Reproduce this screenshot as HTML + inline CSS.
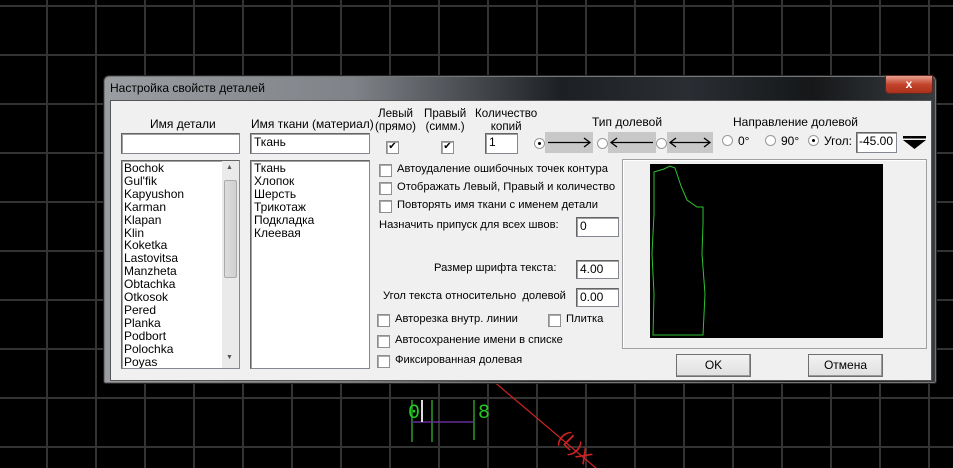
<!DOCTYPE html>
<html><head><meta charset="utf-8"><style>
*{margin:0;padding:0;box-sizing:border-box}
body{width:953px;height:468px;overflow:hidden;position:relative;background-color:#000;
background-image:linear-gradient(90deg,#333 2px,transparent 2px),linear-gradient(#333 2px,transparent 2px);
background-size:49px 49px;background-position:46px 5px;font-family:"Liberation Sans",sans-serif;font-size:11.2px;color:#000}
.a{position:absolute;white-space:nowrap}
.frame{position:absolute;left:103px;top:75px;width:834px;height:309px;border-radius:6px 6px 3px 3px;
background:linear-gradient(90deg,#9a9ea2 0,#7f8388 30%,#1c2024 55%,#2a2e33 70%,#151719 85%,#3a3d40 100%);border:1px solid #222;box-shadow:0 0 0 1px #777 inset}
.client{position:absolute;left:110px;top:100px;width:822px;height:281px;background:#f0f0f0;border:1px solid #555}
.in{position:absolute;background:#fff;border:1px solid #828790;border-top-color:#646464;border-left-color:#646464;box-shadow:inset 1px 1px 0 #a0a0a0;padding:1px 3px;font-size:12px;line-height:15px}
.cb{position:absolute;width:13px;height:13px;background:#fff;border:1px solid #8e8f8f;box-shadow:inset 1px 1px 0 #aaa}
.rd{position:absolute;width:11px;height:11px;border-radius:50%;background:#fff;border:1px solid #999}
.rd.on::after{content:"";position:absolute;left:3px;top:3px;width:3px;height:3px;border-radius:50%;background:#000}
.btn{position:absolute;height:23px;border:1px solid #707070;background:linear-gradient(#f2f2f2,#e0e0e0);text-align:center;line-height:21px;font-size:12px;box-shadow:inset -1px -1px 0 #999}
.list div{line-height:12.9px;font-size:12px}
.arr{position:absolute;top:132px;height:21px;background:#c8c8c8}
</style></head><body>
<svg class="a" style="left:400px;top:380px" width="220" height="88">
<path d="M12 20v42M32 20v42M74 20v40" stroke="#2a9a2a" stroke-width="1.5" fill="none"/>
<path d="M12 42h62" stroke="#c22" stroke-width="1.5"/>
<path d="M12 42h62" stroke="#33c" stroke-width="1"/>
<path d="M22 20v22" stroke="#ddd" stroke-width="2"/>
<text x="8" y="38" fill="#2c2" font-size="20" font-family="Liberation Mono">0</text>
<text x="78" y="38" fill="#2c2" font-size="20" font-family="Liberation Mono">8</text>
<path d="M92 0L210 100" stroke="#c22" stroke-width="1.2"/>
<text x="160" y="68" fill="#c22" font-size="20" transform="rotate(45 170 60)">(L)X</text>
</svg>
<div class="frame"></div>
<div class="a" style="left:110px;top:81px;font-size:12px;color:#000">Настройка свойств деталей</div>
<div class="a" style="left:885px;top:75px;width:48px;height:19px;border-radius:0 0 4px 4px;background:linear-gradient(#e8a090,#c4432c 50%,#a8301c);border:1px solid #5a2a20;color:#fff;text-align:center;font-weight:bold;font-size:12px;line-height:17px">x</div>
<div class="client"></div>

<div class="a" style="left:150px;top:117px;font-size:12px">Имя детали</div>
<div class="in" style="left:121px;top:133px;width:119px;height:21px"></div>
<div class="in list" style="left:121px;top:160px;width:119px;height:209px;padding:1px 2px;overflow:hidden">
<div>Bochok</div><div>Gul'fik</div><div>Kapyushon</div><div>Karman</div><div>Klapan</div><div>Klin</div><div>Koketka</div><div>Lastovitsa</div><div>Manzheta</div><div>Obtachka</div><div>Otkosok</div><div>Pered</div><div>Planka</div><div>Podbort</div><div>Polochka</div><div>Poyas</div></div>
<div class="a" style="left:222px;top:161px;width:17px;height:207px;background:#eaeaea"></div>
<div class="a" style="left:224px;top:180px;width:13px;height:98px;background:linear-gradient(90deg,#ddd,#cfcfcf);border:1px solid #aaa;border-radius:2px"></div>
<div class="a" style="left:226px;top:164px;font-size:7px;color:#555">▲</div>
<div class="a" style="left:226px;top:354px;font-size:7px;color:#555">▼</div>

<div class="a" style="left:251px;top:117px;font-size:12px">Имя ткани (материал)</div>
<div class="in" style="left:250px;top:133px;width:120px;height:21px">Ткань</div>
<div class="in list" style="left:250px;top:160px;width:120px;height:209px;padding:1px 3px">
<div>Ткань</div><div>Хлопок</div><div>Шерсть</div><div>Трикотаж</div><div>Подкладка</div><div>Клеевая</div></div>

<div class="a" style="left:375px;top:108px;text-align:center;line-height:12.5px;font-size:11.6px">Левый<br>(прямо)</div>
<div class="a" style="left:424px;top:108px;text-align:center;line-height:12.5px;font-size:11.6px">Правый<br>(симм.)</div>
<div class="a" style="left:475px;top:108px;text-align:center;line-height:12.5px;font-size:11.6px">Количество<br>копий</div>
<div class="cb" style="left:386px;top:141px;font-size:10px;line-height:10px;text-align:center">✔</div>
<div class="cb" style="left:441px;top:141px;font-size:10px;line-height:10px;text-align:center">✔</div>
<div class="in" style="left:485px;top:133px;width:33px;height:21px">1</div>

<div class="a" style="left:592px;top:115px;font-size:12px">Тип долевой</div>
<div class="rd on" style="left:534px;top:138px"></div>
<div class="arr" style="left:545px;width:48px"></div>
<svg class="a" style="left:545px;top:132px" width="48" height="21"><path d="M3 10.5h42M39 6l6 4.5-6 4.5" stroke="#000" stroke-width="1.3" fill="none"/></svg>
<div class="rd" style="left:597px;top:138px"></div>
<div class="arr" style="left:608px;width:48px"></div>
<svg class="a" style="left:608px;top:132px" width="48" height="21"><path d="M3 10.5h42M9 6l-6 4.5 6 4.5" stroke="#000" stroke-width="1.3" fill="none"/></svg>
<div class="rd" style="left:656px;top:138px"></div>
<div class="arr" style="left:667px;width:46px"></div>
<svg class="a" style="left:667px;top:132px" width="46" height="21"><path d="M3 10.5h40M9 6l-6 4.5 6 4.5M37 6l6 4.5-6 4.5" stroke="#000" stroke-width="1.3" fill="none"/></svg>

<div class="a" style="left:733px;top:115px;font-size:12px">Направление долевой</div>
<div class="rd" style="left:722px;top:135px"></div><div class="a" style="left:738px;top:134px;font-size:12px">0°</div>
<div class="rd" style="left:765px;top:135px"></div><div class="a" style="left:781px;top:134px;font-size:12px">90°</div>
<div class="rd on" style="left:808px;top:135px"></div><div class="a" style="left:824px;top:134px;font-size:12px">Угол:</div>
<div class="in" style="left:856px;top:132px;width:41px;height:21px;padding:1px 2px">-45.00</div>
<svg class="a" style="left:903px;top:136px" width="23" height="14"><rect x="0" y="0" width="23" height="2.5"/><path d="M0 4h23l-11.5 9z"/></svg>

<div class="cb" style="left:379px;top:164px"></div><div class="a" style="left:397px;top:163px">Автоудаление ошибочных точек контура</div>
<div class="cb" style="left:379px;top:182px"></div><div class="a" style="left:397px;top:181px">Отображать Левый, Правый и количество</div>
<div class="cb" style="left:379px;top:200px"></div><div class="a" style="left:397px;top:199px">Повторять имя ткани с именем детали</div>
<div class="a" style="left:379px;top:219px">Назначить припуск для всех швов:</div>
<div class="in" style="left:576px;top:217px;width:43px;height:20px">0</div>
<div class="a" style="left:434px;top:262px">Размер шрифта текста:</div>
<div class="in" style="left:576px;top:260px;width:43px;height:19px">4.00</div>
<div class="a" style="left:383px;top:290px">Угол текста относительно&nbsp; долевой</div>
<div class="in" style="left:576px;top:288px;width:43px;height:19px">0.00</div>
<div class="cb" style="left:377px;top:314px"></div><div class="a" style="left:395px;top:313px">Авторезка внутр. линии</div>
<div class="cb" style="left:548px;top:314px"></div><div class="a" style="left:566px;top:313px">Плитка</div>
<div class="cb" style="left:377px;top:335px"></div><div class="a" style="left:395px;top:334px">Автосохранение имени в списке</div>
<div class="cb" style="left:377px;top:355px"></div><div class="a" style="left:395px;top:354px">Фиксированная долевая</div>

<div class="a" style="left:622px;top:159px;width:305px;height:190px;border:1px solid #a0a0a0;box-shadow:inset 1px 1px 0 #fff"></div>
<div class="a" style="left:650px;top:164px;width:233px;height:174px;background:#000"></div>
<svg class="a" style="left:650px;top:164px" width="233" height="174"><path d="M4 8L14 5 20 2 25 4 31 22 37 36 47 43 53 43 53 60 52 90 55 130 53 171H3L4 130 2 90 4 50Z" stroke="#2fc22f" stroke-width="1" fill="none"/></svg>

<div class="btn" style="left:676px;top:354px;width:75px">OK</div>
<div class="btn" style="left:808px;top:354px;width:75px">Отмена</div>
</body></html>
